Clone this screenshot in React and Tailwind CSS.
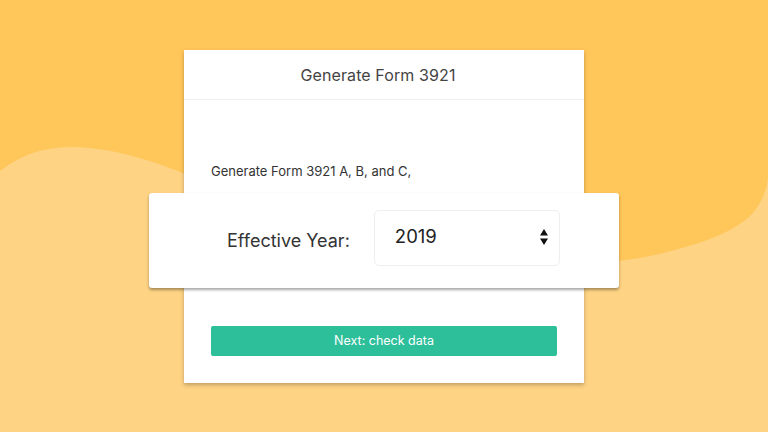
import React from "react";

export default function App() {
  return (
    <div
      className="relative w-[768px] h-[432px] overflow-hidden bg-[#FFC65A]"
      style={{ fontFamily: "Inter, 'Open Sans', sans-serif" }}
    >
      <svg className="absolute inset-0" width="768" height="432" viewBox="0 0 768 432">
        <path
          d="M0,171 C20,155 45,146 75,147 C120,149 160,163 200,180 C300,222 400,252 500,262 C560,267 610,264 650,256 C700,245 735,232 752,214 C764,200 768,185 768,175 L768,432 L0,432 Z"
          fill="#FED384"
        />
      </svg>
      <div className="relative mx-auto mt-[50px] w-[400px] bg-white shadow-[0_2px_4px_rgba(0,0,0,0.25)]">
        <div className="h-[50px] flex items-center justify-center border-b border-[#efefef] text-[16px] text-[#444] tracking-[0.1px] pr-[12px]">
          Generate Form 3921
        </div>
        <div className="pt-[61px] px-[27px] text-[13px] leading-[20px] text-[#333]">
          Generate Form 3921 A, B, and C,
        </div>
        <div className="relative mx-[-35px] mt-[12px] h-[95px] bg-white rounded-[3px] shadow-[0_2px_3px_rgba(0,0,0,0.35)] flex items-start pl-[78px] pt-[17px]">
          <div className="h-[56px] flex items-center text-[18px] text-[#333] mt-[2px]">
            Effective Year:
          </div>
          <div className="ml-[24px] w-[186px] h-[56px] border border-[#eeeeee] rounded-[5px] flex items-center justify-between pl-[20px] pr-[10px]">
            <span className="text-[18.5px] text-[#222] mt-[-2px]">2019</span>
            <svg width="10" height="18" viewBox="0 0 10 18" className="mt-[-3px]">
              <path d="M5 1 L9 7.5 L1 7.5 Z" fill="#111" />
              <path d="M5 17 L9 10.5 L1 10.5 Z" fill="#111" />
            </svg>
          </div>
        </div>
        <div className="px-[27px] pt-[38px] pb-[27px]">
          <div className="h-[30px] rounded-[2px] bg-[#2DBE9A] flex items-center justify-center text-white text-[12.5px]">
            Next: check data
          </div>
        </div>
      </div>
    </div>
  );
}
